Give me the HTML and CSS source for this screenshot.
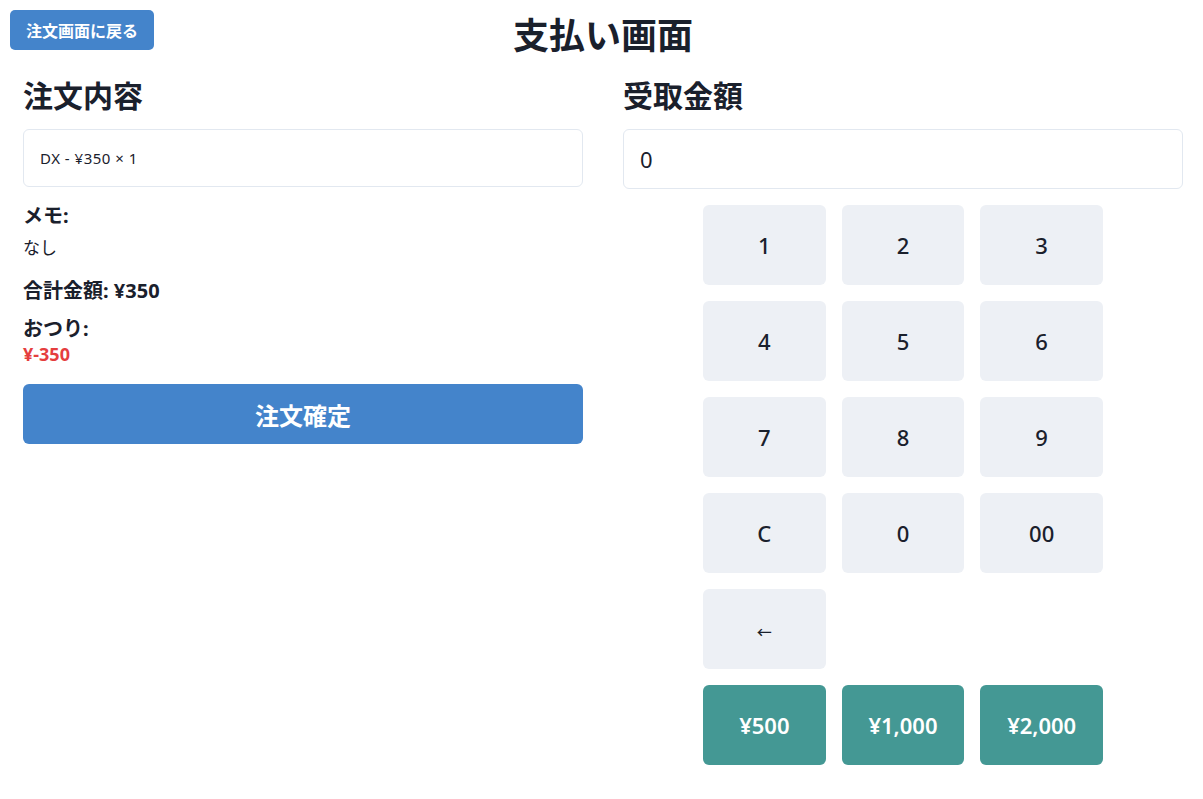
FILE: index.html
```html
<!DOCTYPE html>
<html lang="ja">
<head>
<meta charset="utf-8">
<title>支払い画面</title>
<link rel="stylesheet" href="styles.css">
</head>
<body>
<div class="page">
  <button class="back-btn">注文画面に戻る</button>
  <h1 class="title">支払い画面</h1>
  <div class="columns">
    <section class="col">
      <h2 class="section-title">注文内容</h2>
      <ul class="order-list">
        <li class="order-item">DX - ¥350 × 1</li>
      </ul>
      <div class="memo">
        <div class="label">メモ:</div>
        <div class="memo-value">なし</div>
      </div>
      <div class="total">合計金額: ¥350</div>
      <div class="change">
        <div class="label">おつり:</div>
        <div class="change-value">¥-350</div>
      </div>
      <button class="confirm-btn">注文確定</button>
    </section>
    <section class="col">
      <h2 class="section-title">受取金額</h2>
      <div class="amount-input">0</div>
      <div class="keypad">
        <button class="key">1</button>
        <button class="key">2</button>
        <button class="key">3</button>
        <button class="key">4</button>
        <button class="key">5</button>
        <button class="key">6</button>
        <button class="key">7</button>
        <button class="key">8</button>
        <button class="key">9</button>
        <button class="key">C</button>
        <button class="key">0</button>
        <button class="key">00</button>
        <button class="key key-arrow">←</button>
        <span class="key-empty"></span>
        <span class="key-empty"></span>
        <button class="key key-money">¥500</button>
        <button class="key key-money">¥1,000</button>
        <button class="key key-money">¥2,000</button>
      </div>
    </section>
  </div>
</div>
</body>
</html>
```

FILE: styles.css
```css
* { box-sizing: border-box; }

html, body {
  margin: 0;
  padding: 0;
  background: #ffffff;
}

body {
  font-family: "Noto Sans", "Noto Sans CJK JP", sans-serif;
  color: #1a202c;
}

.page {
  position: relative;
  padding: 14px 20px 0 23px;
}

.back-btn {
  position: absolute;
  top: 10px;
  left: 10px;
  height: 40px;
  padding: 0 16px;
  border: none;
  border-radius: 5px;
  background: #4484cb;
  color: #ffffff;
  font-family: "Noto Sans", "Noto Sans CJK JP", sans-serif;
  font-size: 16px;
  font-weight: 700;
}

.title {
  margin: 0;
  text-align: center;
  font-size: 36px;
  line-height: 44px;
  font-weight: 700;
}

.columns {
  display: grid;
  grid-template-columns: 1fr 1fr;
  column-gap: 40px;
  margin-top: 20px;
}

.section-title {
  margin: 0 0 15px;
  font-size: 30px;
  line-height: 36px;
  font-weight: 700;
}

.order-list {
  list-style: none;
  margin: 0;
  padding: 0;
}

.order-item {
  border: 1px solid #e2e8f0;
  border-radius: 6px;
  padding: 16px;
  font-size: 15px;
  letter-spacing: 0.5px;
  line-height: 24px;
}

.memo {
  margin-top: 15px;
}

.label {
  font-size: 20px;
  line-height: 27px;
  font-weight: 700;
}

.memo-value {
  margin-top: 7px;
  font-size: 17px;
  line-height: 24px;
}

.total {
  margin-top: 17px;
  font-size: 20px;
  line-height: 27px;
  font-weight: 700;
}

.change {
  margin-top: 11px;
}

.change-value {
  font-size: 18px;
  line-height: 24px;
  font-weight: 700;
  color: #e53e3e;
}

.confirm-btn {
  display: block;
  width: 100%;
  height: 60px;
  margin-top: 18px;
  border: none;
  border-radius: 6px;
  background: #4484cb;
  color: #ffffff;
  font-family: "Noto Sans", "Noto Sans CJK JP", sans-serif;
  font-size: 24px;
  font-weight: 700;
}

.amount-input {
  height: 60px;
  border: 1px solid #e2e8f0;
  border-radius: 6px;
  padding: 0 16px;
  display: flex;
  align-items: center;
  font-size: 22px;
}

.keypad {
  display: grid;
  grid-template-columns: repeat(3, 1fr);
  grid-auto-rows: 80px;
  gap: 16px;
  max-width: 400px;
  margin: 16px auto 0;
}

.key {
  border: none;
  border-radius: 6px;
  background: #edf0f5;
  color: #1a202c;
  font-family: "Noto Sans", "Noto Sans CJK JP", sans-serif;
  font-size: 22px;
  font-weight: 500;
}

.key-arrow {
  font-size: 15px;
  padding-top: 6px;
}

.key-money {
  background: #449894;
  color: #ffffff;
  font-weight: 600;
}
```
